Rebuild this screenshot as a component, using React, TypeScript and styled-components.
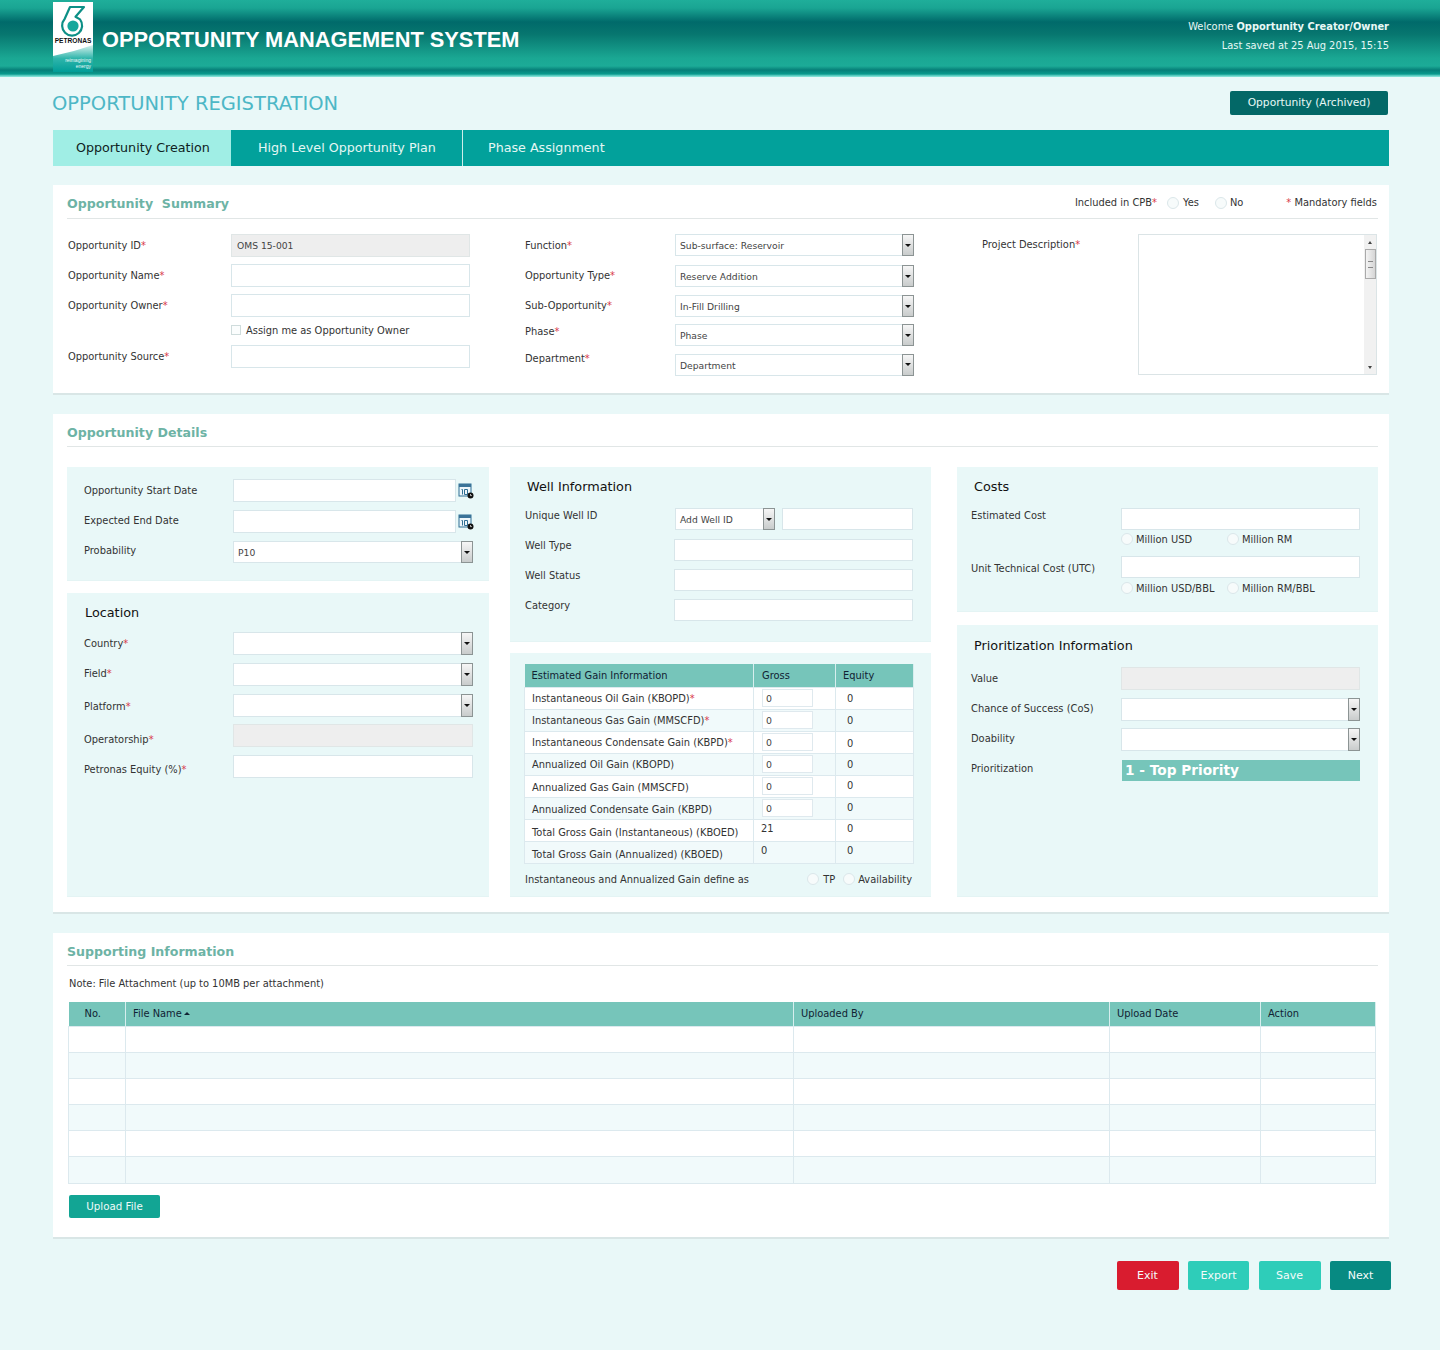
import React from "react";
import styled, { createGlobalStyle } from "styled-components";

const Global = createGlobalStyle`
  html, body { margin: 0; padding: 0; background: #e9f8f8; }
  body { font-family: "DejaVu Sans", Verdana, sans-serif; font-size: 9.9px; color: #333; }
  * { box-sizing: border-box; }
`;

const Page = styled.div`
  width: 1440px;
  height: 1350px;
  background: #e9f8f8;
  overflow: hidden;
`;
const Header = styled.header`
  height: 77px;
  display: flex;
  align-items: flex-start;
  justify-content: space-between;
  padding: 2px 51px 0 53px;
  background: linear-gradient(180deg, #1fae9a 0, #1aa593 8px, #006a6a 22px, #07766f 34px, #1aa793 58px, #1cab97 66px, #067f78 70px, #0a9a8d 74px, #6fd9cd 76px, #8fe5da 77px);
`;
const Brand = styled.div`
  display: flex;
  align-items: center;
  gap: 9px;
`;
const Logo = styled.svg`
  width: 40px;
  height: 70px;
  display: block;
`;
const AppTitle = styled.h1`
  margin: 6px 0 0;
  font: bold 21.8px "Liberation Sans", Arial, sans-serif;
  color: #fff;
`;
const UserInfo = styled.div`
  font-size: 9.9px;
  text-align: right;
  line-height: 19px;
  padding-top: 15px;
  color: #e8f8f6;
  b { font-weight: bold; }
`;
const Main = styled.main`
  width: 1336px;
  margin-left: 53px;
`;
const TitleRow = styled.div`
  height: 53px;
  display: flex;
  align-items: flex-start;
  justify-content: space-between;
  padding-right: 1px;
`;
const PageTitle = styled.h2`
  margin: 15px 0 0 -1px;
  font-size: 19.5px;
  line-height: 24px;
  font-weight: normal;
  color: #4db7c6;
`;
const ArchiveButton = styled.button`
  width: 158px;
  height: 24px;
  margin-top: 14px;
  padding: 0 0 2px;
  border: 0;
  border-radius: 2px;
  background: #036867;
  color: #e8f8f6;
  font: 10.7px "DejaVu Sans", sans-serif;
`;
const Tabs = styled.nav`
  height: 36px;
  display: flex;
  background: #02a19b;
`;
const Tab = styled.div<{ $w: number; $active?: boolean; $pad: number; $line?: boolean }>`
  width: ${(p) => p.$w}px;
  padding-left: ${(p) => p.$pad}px;
  line-height: 36px;
  font-size: 12.7px;
  background: ${(p) => (p.$active ? "#a0eee5" : "transparent")};
  color: ${(p) => (p.$active ? "#0f2222" : "#e4f7f4")};
  border-right: ${(p) => (p.$line ? "1px solid #cdeeea" : "0")};
`;
const Card = styled.section<{ $h: number; $mt: number }>`
  height: ${(p) => p.$h}px;
  margin-top: ${(p) => p.$mt}px;
  padding: 0 11px 0 14px;
  background: #fff;
  border-bottom: 2px solid #d9e6e6;
`;
const CardHead = styled.div<{ $h: number }>`
  height: ${(p) => p.$h}px;
  display: flex;
  align-items: center;
  justify-content: space-between;
  border-bottom: 1px solid #e1e6e6;
`;
const CardTitle = styled.h3`
  margin: 4px 0 0;
  font-size: 12.6px;
  font-weight: bold;
  color: #6db3a5;
  white-space: pre;
`;
const HeadTools = styled.div`
  display: flex;
  align-items: center;
  margin-top: 2px;
  padding-right: 1px;
`;
const Req = styled.span`
  color: #d8394a;
`;
const Radio = styled.span<{ $mr?: number; $ml?: number }>`
  display: inline-block;
  width: 12px;
  height: 12px;
  flex: none;
  border-radius: 50%;
  border: 1px solid #dbe7ea;
  background: #f7fbfb;
  margin-left: ${(p) => p.$ml ?? 0}px;
  margin-right: ${(p) => p.$mr ?? 3}px;
`;
const RadioLabel = styled.span<{ $mr?: number }>`
  margin-right: ${(p) => p.$mr ?? 0}px;
`;
const SummaryGrid = styled.div`
  display: grid;
  grid-template-columns: 457px 457px 396px;
  padding: 15px 0 0 1px;
`;
const Col = styled.div`
  display: flex;
  flex-direction: column;
`;
const Row = styled.div<{ $mt?: number }>`
  display: flex;
  align-items: center;
  margin-top: ${(p) => p.$mt ?? 0}px;
`;
const TopRow = styled(Row)`
  align-items: flex-start;
`;
const Label = styled.label<{ $w: number; $up?: number; $down?: number }>`
  width: ${(p) => p.$w}px;
  flex: none;
  padding-bottom: ${(p) => p.$up ?? 0}px;
  padding-top: ${(p) => p.$down ?? 0}px;
  white-space: nowrap;
`;
const TextBox = styled.input<{ $w: number; $h?: number; $grey?: boolean; $ml?: number }>`
  width: ${(p) => p.$w}px;
  height: ${(p) => p.$h ?? 23}px;
  margin-left: ${(p) => p.$ml ?? 0}px;
  padding: 0 5px;
  border: 1px solid ${(p) => (p.$grey ? "#e0e6e6" : "#d8e6ea")};
  border-radius: 0;
  outline: 0;
  background: ${(p) => (p.$grey ? "#eeeeee" : "#fff")};
  color: #444;
  font: 9.2px "DejaVu Sans", sans-serif;
`;
const SelectWrap = styled.div<{ $w: number; $h?: number }>`
  width: ${(p) => p.$w}px;
  height: ${(p) => p.$h ?? 23}px;
  display: flex;
  align-items: stretch;
`;
const SelectValue = styled.div`
  flex: 1;
  padding-left: 4px;
  line-height: 21px;
  font-size: 9.2px;
  color: #444;
  background: #fff;
  border: 1px solid #d8e6ea;
  border-right: 0;
  white-space: nowrap;
`;
const SelectArrow = styled.div`
  width: 12px;
  flex: none;
  display: flex;
  align-items: center;
  justify-content: center;
  border: 1px solid #8c9494;
  background: linear-gradient(180deg, #f6f6f6, #c9cccc);
  &::after {
    content: "";
    border-left: 3px solid transparent;
    border-right: 3px solid transparent;
    border-top: 3px solid #111;
  }
`;
const Select = ({ w, h, v }: { w: number; h?: number; v?: string }) => (
  <SelectWrap $w={w} $h={h}>
    <SelectValue>{v}</SelectValue>
    <SelectArrow />
  </SelectWrap>
);
const CheckBox = styled.span`
  display: inline-block;
  width: 10px;
  height: 10px;
  margin-right: 5px;
  border: 1px solid #cfdcdc;
  background: #fbfdfd;
`;
const CheckRow = styled.div`
  height: 28px;
  padding: 0 0 2px 163px;
  display: flex;
  align-items: center;
`;
const DescBox = styled.div`
  width: 239px;
  height: 141px;
  display: flex;
  justify-content: flex-end;
  background: #fff;
  border: 1px solid #dbe4e6;
`;
const ScrollBar = styled.div`
  width: 12px;
  display: flex;
  flex-direction: column;
  align-items: center;
  background: #f1f1f1;
`;
const ScrollUp = styled.span`
  height: 14px;
  display: flex;
  align-items: center;
  &::after {
    content: "";
    border-left: 2.5px solid transparent;
    border-right: 2.5px solid transparent;
    border-bottom: 3px solid #444;
  }
`;
const ScrollThumb = styled.span`
  width: 11px;
  height: 30px;
  border: 1px solid #aaa;
  background: linear-gradient(90deg, #f4f4f4, #d5d5d5);
  display: flex;
  align-items: center;
  justify-content: center;
  &::after {
    content: "";
    width: 5px;
    height: 5px;
    border-top: 1px solid #888;
    border-bottom: 1px solid #888;
  }
`;
const ScrollDown = styled.span`
  height: 14px;
  margin-top: auto;
  display: flex;
  align-items: center;
  &::after {
    content: "";
    border-left: 2.5px solid transparent;
    border-right: 2.5px solid transparent;
    border-top: 3px solid #444;
  }
`;
const PanelsGrid = styled.div`
  display: grid;
  grid-template-columns: 443px 447px 421px;
  padding-top: 20px;
`;
const PanelCol = styled.div<{ $w: number }>`
  display: flex;
  flex-direction: column;
  height: 430px;
  width: ${(p) => p.$w}px;
`;
const Panel = styled.div<{ $h?: number; $mt?: number; $pl: number; $pt?: number }>`
  ${(p) => (p.$h ? `height: ${p.$h}px;` : "flex: 1;")}
  margin-top: ${(p) => p.$mt ?? 0}px;
  padding: ${(p) => p.$pt ?? 0}px 0 0 ${(p) => p.$pl}px;
  background: #e9f8f8;
  border-bottom: 1px solid #e4f4f4;
`;
const PanelTitle = styled.h4<{ $h: number; $ml: number; $pt?: number }>`
  margin: 0 0 0 ${(p) => p.$ml}px;
  height: ${(p) => p.$h}px;
  padding-top: ${(p) => p.$pt ?? 10}px;
  font-size: 12.8px;
  line-height: 20px;
  font-weight: normal;
  color: #111;
`;
const DateIcon = styled.svg`
  width: 16px;
  height: 16px;
  margin-left: 2px;
`;
const RadioLine = styled.div<{ $mt?: number }>`
  height: 18px;
  margin-top: ${(p) => p.$mt ?? 0}px;
  padding: 0 0 0 150px;
  display: flex;
  align-items: center;
`;
const RadioSlot = styled.div<{ $w: number }>`
  width: ${(p) => p.$w}px;
  display: flex;
  align-items: center;
  white-space: nowrap;
`;
const PriorityBand = styled.div`
  width: 238px;
  height: 21px;
  padding-left: 3px;
  background: #76c5ba;
  color: #fff;
  font-size: 13.7px;
  font-weight: bold;
  line-height: 20px;
  white-space: nowrap;
`;
const GainTable = styled.table`
  width: 390px;
  margin-left: -1px;
  table-layout: fixed;
  border-collapse: collapse;
`;
const Th = styled.th<{ $w?: number; $pl: number }>`
  width: ${(p) => (p.$w ? `${p.$w}px` : "auto")};
  height: 23px;
  padding: 0 0 0 ${(p) => p.$pl}px;
  background: #76c5ba;
  border-right: 1px solid #d7eeee;
  font-weight: normal;
  text-align: left;
  color: #123;
`;
const Td = styled.td<{ $pl: number; $dy?: number }>`
  height: 22px;
  padding: ${(p) => Math.max(p.$dy ?? 0, 0)}px 0 ${(p) => Math.max(-(p.$dy ?? 0), 0)}px ${(p) => p.$pl}px;
  line-height: 12px;
  border: 1px solid #dce9ee;
  white-space: nowrap;
`;
const GainRow = styled.tr<{ $alt: boolean }>`
  background: ${(p) => (p.$alt ? "#f1fafb" : "#fff")};
`;
const MiniInput = styled.input`
  display: block;
  width: 51px;
  height: 18px;
  padding: 0 3px;
  border: 1px solid #dfe9ee;
  background: #fff;
  color: #444;
  font: 9.4px "DejaVu Sans", sans-serif;
`;
const GainFoot = styled.div`
  width: 389px;
  height: 31px;
  display: flex;
  align-items: center;
  justify-content: space-between;
`;
const GainOpts = styled.div`
  display: flex;
  align-items: center;
  padding-right: 2px;
`;
const Note = styled.p`
  margin: 0;
  height: 36px;
  padding: 11px 0 0 2px;
  line-height: 14px;
`;
const FileTable = styled.table`
  width: 1308px;
  margin-left: 1px;
  table-layout: fixed;
  border-collapse: collapse;
`;
const FileTh = styled.th<{ $w?: number; $pl: number }>`
  width: ${(p) => (p.$w ? `${p.$w}px` : "auto")};
  height: 24px;
  padding: 0 0 0 ${(p) => p.$pl}px;
  background: #76c5ba;
  border-right: 1px solid #d7eeee;
  font-weight: normal;
  text-align: left;
  color: #123;
`;
const FileTd = styled.td`
  height: 26.2px;
  border: 1px solid #dce9ee;
`;
const SortMark = styled.span`
  display: inline-block;
  margin-left: 2px;
  vertical-align: 2px;
  border-left: 3px solid transparent;
  border-right: 3px solid transparent;
  border-bottom: 3px solid #123;
`;
const UploadButton = styled.button`
  display: block;
  width: 91px;
  height: 23px;
  margin: 11px 0 0 2px;
  border: 0;
  border-radius: 2px;
  background: #12a594;
  color: #eefbf9;
  font: 10.3px "DejaVu Sans", sans-serif;
`;
const ActionBar = styled.div`
  display: flex;
  justify-content: flex-end;
  gap: 9.5px;
  margin: 22px -2px 0 0;
`;
const ActionButton = styled.button<{ $bg: string; $w: number }>`
  width: ${(p) => p.$w}px;
  height: 29px;
  border: 0;
  border-radius: 2px;
  background: ${(p) => p.$bg};
  color: #f4fbfa;
  font: 11px "DejaVu Sans", sans-serif;
`;

const Cal = () => (
  <DateIcon viewBox="0 0 16 16">
    <rect x="1" y="1" width="12" height="12" fill="#eef6fa" stroke="#2f6f94" />
    <rect x="1" y="1" width="12" height="3" fill="#3b7398" />
    <path d="M3.5 6.5h1v5M6.5 6.5h3v5h-3z" fill="none" stroke="#2f6f94" strokeWidth="1" />
    <circle cx="12.5" cy="12.5" r="3" fill="#111" />
    <path d="M12.5 11v1.6h1.4" fill="none" stroke="#fff" strokeWidth=".7" />
  </DateIcon>
);

const gains: [string, boolean, string | null, string, number, number][] = [
  ["Instantaneous Oil Gain (KBOPD)", true, "0", "0", 2, 2],
  ["Instantaneous Gas Gain (MMSCFD)", true, "0", "0", 2, 2],
  ["Instantaneous Condensate Gain (KBPD)", true, "0", "0", 2, 3],
  ["Annualized Oil Gain (KBOPD)", false, "0", "0", 2, 2],
  ["Annualized Gas Gain (MMSCFD)", false, "0", "0", 3, 0],
  ["Annualized Condensate Gain (KBPD)", false, "0", "0", 3, 0],
  ["Total Gross Gain (Instantaneous) (KBOED)", false, null, "21", 6, -2],
  ["Total Gross Gain (Annualized) (KBOED)", false, null, "0", 6, -2],
];

const R = () => <Req>*</Req>;

export default function App() {
  return (
    <Page>
      <Global />
      <Header>
        <Brand>
          <Logo viewBox="0 0 40 70" role="img" aria-label="Petronas">
            <defs>
              <linearGradient id="lg" x1="0" y1="0" x2="0" y2="1">
                <stop offset="0" stopColor="#d6f1ed" />
                <stop offset=".5" stopColor="#2fb5ab" />
                <stop offset="1" stopColor="#009d97" />
              </linearGradient>
            </defs>
            <rect width="40" height="70" fill="#fff" />
            <path d="M0 54 Q20 50 40 43 V70 H0z" fill="url(#lg)" />
            <path d="M31 5H17L11.6 17A10 10 0 1 0 27 17.4L22.5 14.8z" fill="#fff" stroke="#0c8f86" strokeWidth="2.2" strokeLinejoin="round" />
            <circle cx="20" cy="24" r="5.6" fill="#17a79c" />
            <path d="M28 6.5H19L15 14.5z" fill="#fff" />
            <text x="20" y="40.5" textAnchor="middle" fontFamily="Liberation Sans" fontWeight="bold" fontSize="6.6" fill="#111">PETRONAS</text>
            <text x="38" y="60" textAnchor="end" fontFamily="Liberation Sans" fontSize="5" fill="#e8f8f6">reimagining</text>
            <text x="38" y="66" textAnchor="end" fontFamily="Liberation Sans" fontSize="5" fill="#e8f8f6">energy</text>
          </Logo>
          <AppTitle>OPPORTUNITY MANAGEMENT SYSTEM</AppTitle>
        </Brand>
        <UserInfo>
          Welcome <b>Opportunity Creator/Owner</b>
          <br />
          Last saved at 25 Aug 2015, 15:15
        </UserInfo>
      </Header>
      <Main>
        <TitleRow>
          <PageTitle>OPPORTUNITY REGISTRATION</PageTitle>
          <ArchiveButton>Opportunity (Archived)</ArchiveButton>
        </TitleRow>
        <Tabs>
          <Tab $w={178} $pad={23} $active>Opportunity Creation</Tab>
          <Tab $w={232} $pad={27} $line>High Level Opportunity Plan</Tab>
          <Tab $w={300} $pad={25}>Phase Assignment</Tab>
        </Tabs>

        <Card $h={210} $mt={19}>
          <CardHead $h={34}>
            <CardTitle>Opportunity  Summary</CardTitle>
            <HeadTools>
              Included in CPB<R />
              <Radio $ml={10} $mr={4} />
              <RadioLabel $mr={16}>Yes</RadioLabel>
              <Radio />
              <RadioLabel $mr={43}>No</RadioLabel>
              <Req>*</Req>&nbsp;Mandatory fields
            </HeadTools>
          </CardHead>
          <SummaryGrid>
            <Col>
              <Row><Label $w={163}>Opportunity ID<R /></Label><TextBox $w={239} $grey readOnly value="OMS 15-001" /></Row>
              <Row $mt={7}><Label $w={163}>Opportunity Name<R /></Label><TextBox $w={239} /></Row>
              <Row $mt={7}><Label $w={163}>Opportunity Owner<R /></Label><TextBox $w={239} /></Row>
              <CheckRow><CheckBox />Assign me as Opportunity Owner</CheckRow>
              <Row><Label $w={163}>Opportunity Source<R /></Label><TextBox $w={239} /></Row>
            </Col>
            <Col>
              <Row><Label $w={150}>Function<R /></Label><Select w={239} h={22} v="Sub-surface: Reservoir" /></Row>
              <Row $mt={9}><Label $w={150} $up={2}>Opportunity Type<R /></Label><Select w={239} h={22} v="Reserve Addition" /></Row>
              <Row $mt={8}><Label $w={150} $up={2}>Sub-Opportunity<R /></Label><Select w={239} h={22} v="In-Fill Drilling" /></Row>
              <Row $mt={7}><Label $w={150} $up={8}>Phase<R /></Label><Select w={239} h={22} v="Phase" /></Row>
              <Row $mt={7}><Label $w={150} $up={12}>Department<R /></Label><Select w={239} h={22} v="Department" /></Row>
            </Col>
            <TopRow>
              <Label $w={156} $down={5}>Project Description<R /></Label>
              <DescBox>
                <ScrollBar>
                  <ScrollUp />
                  <ScrollThumb />
                  <ScrollDown />
                </ScrollBar>
              </DescBox>
            </TopRow>
          </SummaryGrid>
        </Card>

        <Card $h={500} $mt={19}>
          <CardHead $h={33}><CardTitle>Opportunity Details</CardTitle></CardHead>
          <PanelsGrid>
            <PanelCol $w={422}>
              <Panel $h={114} $pl={17} $pt={12}>
                <Row><Label $w={149}>Opportunity Start Date</Label><TextBox $w={223} /><Cal /></Row>
                <Row $mt={8}><Label $w={149} $up={2}>Expected End Date</Label><TextBox $w={223} /><Cal /></Row>
                <Row $mt={8}><Label $w={149} $up={4}>Probability</Label><Select w={240} h={22} v="P10" /></Row>
              </Panel>
              <Panel $mt={12} $pl={17}>
                <PanelTitle $h={39} $ml={1}>Location</PanelTitle>
                <Row><Label $w={149}>Country<R /></Label><Select w={240} /></Row>
                <Row $mt={8}><Label $w={149} $up={2}>Field<R /></Label><Select w={240} /></Row>
                <Row $mt={8}><Label $w={149} $down={2}>Platform<R /></Label><Select w={240} /></Row>
                <Row $mt={7}><Label $w={149} $down={8}>Operatorship<R /></Label><TextBox $w={240} $grey /></Row>
                <Row $mt={8}><Label $w={149} $down={6}>Petronas Equity (%)<R /></Label><TextBox $w={240} /></Row>
              </Panel>
            </PanelCol>
            <PanelCol $w={421}>
              <Panel $h={175} $pl={15}>
                <PanelTitle $h={41} $ml={2}>Well Information</PanelTitle>
                <Row>
                  <Label $w={150} $up={8}>Unique Well ID</Label>
                  <Select w={100} h={22} v="Add Well ID" />
                  <TextBox $w={131} $h={22} $ml={7} />
                </Row>
                <Row $mt={9}><Label $w={149} $up={10}>Well Type</Label><TextBox $w={239} $h={22} /></Row>
                <Row $mt={8}><Label $w={149} $up={10}>Well Status</Label><TextBox $w={239} $h={22} /></Row>
                <Row $mt={8}><Label $w={149} $up={10}>Category</Label><TextBox $w={239} $h={22} /></Row>
              </Panel>
              <Panel $mt={11} $pl={15} $pt={11}>
                <GainTable>
                  <thead>
                    <tr>
                      <Th $w={229} $pl={7}>Estimated Gain Information</Th>
                      <Th $w={82} $pl={8}>Gross</Th>
                      <Th $pl={7}>Equity</Th>
                    </tr>
                  </thead>
                  <tbody>
                    {gains.map(([name, req, input, val, dy, eqDy], i) => (
                      <GainRow key={name} $alt={i % 2 === 1}>
                        <Td $pl={7} $dy={dy}>{name}{req && <R />}</Td>
                        <Td $pl={input !== null ? 8 : 7} $dy={input !== null ? 0 : -2}>
                          {input !== null ? <MiniInput readOnly value={input} /> : val}
                        </Td>
                        <Td $pl={11} $dy={eqDy}>0</Td>
                      </GainRow>
                    ))}
                  </tbody>
                </GainTable>
                <GainFoot>
                  Instantaneous and Annualized Gain define as
                  <GainOpts>
                    <Radio $mr={4} />
                    <RadioLabel $mr={8}>TP</RadioLabel>
                    <Radio />
                    <RadioLabel>Availability</RadioLabel>
                  </GainOpts>
                </GainFoot>
              </Panel>
            </PanelCol>
            <PanelCol $w={421}>
              <Panel $h={145} $pl={14}>
                <PanelTitle $h={41} $ml={3}>Costs</PanelTitle>
                <Row><Label $w={150} $up={8}>Estimated Cost</Label><TextBox $w={239} $h={22} /></Row>
                <RadioLine>
                  <RadioSlot $w={106}><Radio />Million USD</RadioSlot>
                  <RadioSlot $w={120}><Radio />Million RM</RadioSlot>
                </RadioLine>
                <Row $mt={8}><Label $w={150} $down={2}>Unit Technical Cost (UTC)</Label><TextBox $w={239} $h={22} /></Row>
                <RadioLine $mt={1}>
                  <RadioSlot $w={106}><Radio />Million USD/BBL</RadioSlot>
                  <RadioSlot $w={120}><Radio />Million RM/BBL</RadioSlot>
                </RadioLine>
              </Panel>
              <Panel $mt={13} $pl={14}>
                <PanelTitle $h={42} $ml={3} $pt={11}>Prioritization Information</PanelTitle>
                <Row><Label $w={150}>Value</Label><TextBox $w={239} $grey /></Row>
                <Row $mt={8}><Label $w={150} $up={2}>Chance of Success (CoS)</Label><Select w={239} /></Row>
                <Row $mt={7}><Label $w={150} $up={2}>Doability</Label><Select w={239} /></Row>
                <Row $mt={9}><Label $w={151} $up={4}>Prioritization</Label><PriorityBand>1 - Top Priority</PriorityBand></Row>
              </Panel>
            </PanelCol>
          </PanelsGrid>
        </Card>

        <Card $h={306} $mt={19}>
          <CardHead $h={33}><CardTitle>Supporting Information</CardTitle></CardHead>
          <Note>Note: File Attachment (up to 10MB per attachment)</Note>
          <FileTable>
            <thead>
              <tr>
                <FileTh $w={57} $pl={16}>No.</FileTh>
                <FileTh $w={668} $pl={7}>File Name<SortMark /></FileTh>
                <FileTh $w={316} $pl={7}>Uploaded By</FileTh>
                <FileTh $w={151} $pl={7}>Upload Date</FileTh>
                <FileTh $pl={7}>Action</FileTh>
              </tr>
            </thead>
            <tbody>
              {[0, 1, 2, 3, 4, 5].map((r) => (
                <GainRow key={r} $alt={r % 2 === 1}>
                  <FileTd /><FileTd /><FileTd /><FileTd /><FileTd />
                </GainRow>
              ))}
            </tbody>
          </FileTable>
          <UploadButton>Upload File</UploadButton>
        </Card>

        <ActionBar>
          <ActionButton $bg="#d91c2f" $w={62}>Exit</ActionButton>
          <ActionButton $bg="#2ecdb9" $w={61}>Export</ActionButton>
          <ActionButton $bg="#2ecdb9" $w={62}>Save</ActionButton>
          <ActionButton $bg="#078a82" $w={61}>Next</ActionButton>
        </ActionBar>
      </Main>
    </Page>
  );
}
